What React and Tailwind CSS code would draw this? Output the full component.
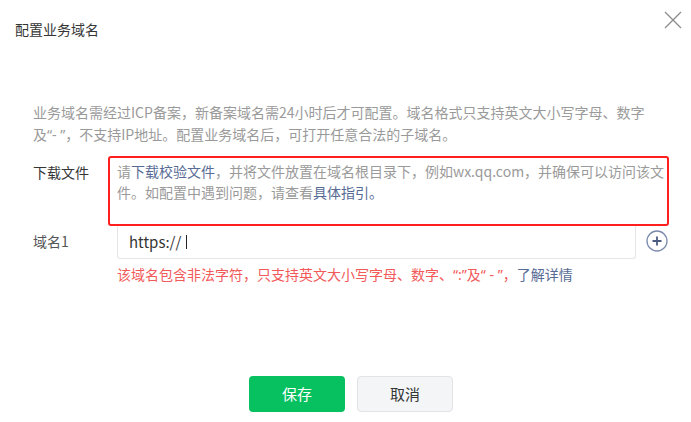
import React from "react";

const font = { fontFamily: '"Noto Sans CJK SC", "Noto Sans", sans-serif' };

const CloseIcon = () => (
  <svg width="18" height="18" viewBox="0 0 18 18" fill="none">
    <path d="M1 1L17 17M17 1L1 17" stroke="#8c8c8c" strokeWidth="1.3" />
  </svg>
);

const PlusIcon = () => (
  <svg width="22" height="22" viewBox="0 0 22 22" fill="none">
    <circle cx="11" cy="11" r="10" stroke="#7b8bad" strokeWidth="1.3" />
    <path d="M11 6.5V15.5M6.5 11H15.5" stroke="#4b5b82" strokeWidth="1.8" />
  </svg>
);

// narrow latin quotes, the CJK font draws them full width
const Q = ({ children }) => (
  <span className="font-['Noto_Sans']">{children}</span>
);

const App = () => {
  return (
    <div
      className="w-[691px] h-[422px] bg-white flex flex-col overflow-hidden"
      style={font}
    >
      <div className="flex justify-between items-start pl-[15px] pr-[9px] pt-[11px]">
        <h1 className="mt-[8px] text-[14px] leading-[20px] text-[#353535]">
          配置业务域名
        </h1>
        <CloseIcon />
      </div>

      <p className="mt-[62px] px-[33px] text-[14px] leading-[22px] text-[#9a9a9a] whitespace-nowrap">
        业务域名需经过ICP备案，新备案域名需24小时后才可配置。域名格式只支持英文大小写字母、数字
        <br />
        及<Q>“- ”</Q>，不支持IP地址。配置业务域名后，可打开任意合法的子域名。
      </p>

      <div className="mt-[10px] flex pl-[33px]">
        <div className="w-[75px] pt-[6px] text-[14px] leading-[21px] text-[#353535]">
          下载文件
        </div>
        <div className="w-[561px] h-[70px] border-2 border-[#ff1f1f] rounded-[3px] pl-[7px] pt-[3px] text-[14px] leading-[21px] text-[#9a9a9a] whitespace-nowrap">
          请<span className="text-[#576b95]">下载校验文件</span>
          ，并将文件放置在域名根目录下，例如wx.qq.com，并确保可以访问该文
          <br />
          件。如配置中遇到问题，请查看
          <span className="text-[#576b95]">具体指引。</span>
        </div>
      </div>

      <div className="flex items-start pl-[33px]">
        <div className="w-[84px] pt-[5px] text-[14px] leading-[20px] text-[#555555]">
          域名1
        </div>
        <div className="w-[519px] h-[33px] border border-t-0 border-[#e4e6e9] rounded-b-[3px] pl-[11px] flex items-center text-[15px] text-[#353535]">
          <span>https://</span>
          <span className="ml-[5px] w-px h-[14px] bg-[#222222]" />
        </div>
        <div className="ml-[10px] mt-[4px]">
          <PlusIcon />
        </div>
      </div>

      <p className="mt-[5px] pl-[117px] text-[14px] leading-[20px] text-[#f25a5a] whitespace-nowrap">
        该域名包含非法字符，只支持英文大小写字母、数字、<Q>“:”</Q>及
        <Q>“ - ”</Q>，<span className="text-[#576b95]">了解详情</span>
      </p>

      <div className="mt-[91px] flex justify-center gap-[12px] pl-[11px]">
        <button
          type="button"
          className="w-[96px] h-[36px] rounded-[4px] bg-[#07c160] text-white text-[15px]"
        >
          保存
        </button>
        <button
          type="button"
          className="w-[96px] h-[36px] rounded-[4px] bg-[#f4f5f7] border border-[#e2e3e6] text-[#353535] text-[15px]"
        >
          取消
        </button>
      </div>
    </div>
  );
};

export default App;
